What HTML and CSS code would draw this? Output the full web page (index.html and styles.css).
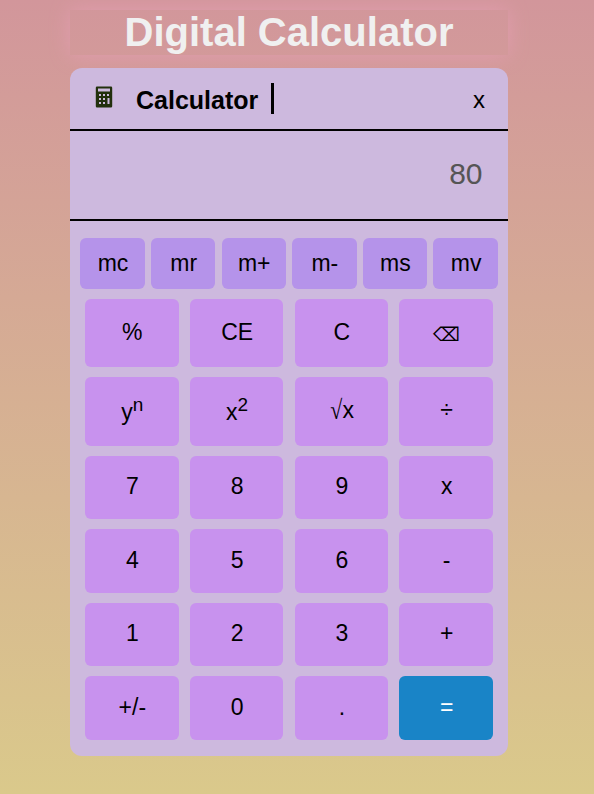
FILE: index.html
```html
<!DOCTYPE html>
<html lang="en">
<head>
<meta charset="utf-8">
<title>Digital Calculator</title>
<link rel="stylesheet" href="styles.css">
</head>
<body>
<h1 class="title">Digital Calculator</h1>
<main class="calculator">
  <header class="header">
    <svg class="logo" viewBox="0 0 18 22" aria-hidden="true">
      <path fill="#22300d" fill-rule="evenodd" d="M2 .5h14q1.200 0 1.200 1.200v18.600q0 1.200-1.200 1.200H2Q.8 21.500.8 20.300V1.700Q.8.500 2 .5zM3 2.500v3h12v-3zM4 8v2h2V8zM8 8v2h2V8zM12 8v2h2V8zM4 12v2h2v-2zM8 12v2h2v-2zM12.500 12v6h2v-6zM4 16v2h2v-2zM8 16v2h2v-2z"/>
    </svg>
    <h2 class="name">Calculator</h2>
    <span class="caret"></span>
    <span class="close">x</span>
  </header>
  <output class="display">80</output>
  <section class="memory">
    <button>mc</button><button>mr</button><button>m+</button><button>m-</button><button>ms</button><button>mv</button>
  </section>
  <section class="keys">
    <button>%</button><button>CE</button><button>C</button><button class="erase">⌫</button>
    <button class="power">y<sup>n</sup></button><button class="power">x<sup>2</sup></button><button><span class="radical">√</span>x</button><button>÷</button>
    <button>7</button><button>8</button><button>9</button><button>x</button>
    <button>4</button><button>5</button><button>6</button><button>-</button>
    <button>1</button><button>2</button><button>3</button><button>+</button>
    <button>+/-</button><button>0</button><button>.</button><button class="equals">=</button>
  </section>
</main>
</body>
</html>
```
FILE: styles.css
```css
* {
  box-sizing: border-box;
}

body {
  margin: 0;
  min-height: 794px;
  padding: 10px 86px 0 70px;
  background: linear-gradient(#d2969b, #dac98b);
  font-family: "Liberation Sans", Arial, sans-serif;
  color: #000;
}

.title {
  height: 45px;
  margin: 0 0 13px;
  font-size: 40px;
  line-height: 45px;
  text-align: center;
  color: #f0f0f0;
  box-shadow: 0 0 20px #e29daf;
}

.calculator {
  height: 687.500px;
  border-radius: 12px;
  background: #cdb9de;
}

.header {
  display: flex;
  align-items: flex-start;
  height: 63px;
  padding: 15px 23px 0 25px;
  border-bottom: 2px solid #000;
}

.logo {
  width: 18px;
  height: 22px;
  margin-top: 3px;
}

.name {
  margin: 3px 13px 0 23px;
  font-size: 25px;
  line-height: 28px;
}

.caret {
  width: 3px;
  height: 31px;
  background: #000;
}

.close {
  margin: 2px 0 0 auto;
  font-size: 24px;
  line-height: 29px;
}

.display {
  display: block;
  height: 90px;
  padding: 0 25.500px;
  border-bottom: 2px solid #000;
  font-size: 30px;
  line-height: 85px;
  text-align: right;
  color: #555;
}

button {
  padding: 0 0 1px 1px;
  border: 0;
  border-radius: 6px;
  background: #c892ee;
  font: 23px "Liberation Sans", Arial, sans-serif;
  color: #000;
}

.memory {
  display: grid;
  grid-template-columns: repeat(6, 1fr);
  gap: 6.100px;
  height: 51px;
  margin: 17px 10.200px 0 10.300px;
}

.memory button {
  background: #b593ea;
}

.keys {
  display: grid;
  grid-template-columns: repeat(4, 1fr);
  grid-template-rows: repeat(2, 68.500px) repeat(4, 63.500px);
  gap: 10px 11.100px;
  margin: 9.800px 15px 0;
}

.keys button {
  padding-bottom: 2px;
}

.keys .power {
  padding-bottom: 3px;
}

sup {
  font-size: 19px;
}

.radical {
  display: inline-block;
  font-family: "Liberation Serif", serif;
  transform: scale(0.95, 1.15);
}

.keys .erase {
  padding: 4px 0 1px;
  font-size: 19px;
}

.keys .equals {
  background: #1984c7;
  color: #fff;
}
```
